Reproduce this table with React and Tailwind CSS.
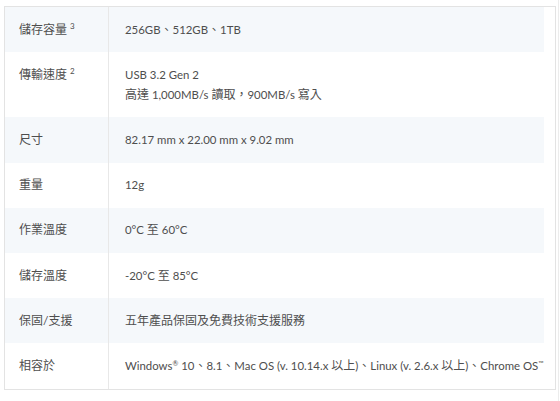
const rows = [
  { label: "儲存容量", sup: "3", value: ["256GB、512GB、1TB"] },
  { label: "傳輸速度", sup: "2", value: ["USB 3.2 Gen 2", "高達 1,000MB/s 讀取，900MB/s 寫入"] },
  { label: "尺寸", value: ["82.17 mm x 22.00 mm x 9.02 mm"] },
  { label: "重量", value: ["12g"] },
  { label: "作業溫度", value: ["0°C 至 60°C"] },
  { label: "儲存溫度", value: ["-20°C 至 85°C"] },
  { label: "保固/支援", value: ["五年產品保固及免費技術支援服務"] },
  { label: "相容於", value: null },
];

function Mixed({ text }) {
  const parts = text.split(/([\u3000-\u303f\u4e00-\u9fff\uff00-\uffef]+)/).filter(Boolean);
  return parts.map((part, i) =>
    /[\u3000-\u303f\u4e00-\u9fff\uff00-\uffef]/.test(part) ? (
      <span key={i}>{part}</span>
    ) : (
      <span key={i} className="text-[11.4px]">
        {part}
      </span>
    )
  );
}

export default function App() {
  return (
    <div
      className="flex h-[401px] w-[560px] bg-white text-[12px] leading-5 text-[#4e4e4e]"
      style={{ fontFamily: 'Lato, "Noto Sans CJK TC", sans-serif' }}
    >
      <div className="flex-1 pl-1 pr-[2px] pt-[6px]">
        <div className="border border-[#e3e3e3] pr-[11px]">
          {rows.map((row, i) => (
            <div key={row.label} className={`flex ${i % 2 === 0 ? "bg-[#f5f8fb]" : "bg-white"}`}>
              <div className="w-[104px] shrink-0 border-r border-[#e8e8e8] py-[12.6px] pl-[14px]">
                {row.label}
                {row.sup ? <span className="ml-[3px] align-[5px] text-[8px] leading-none">{row.sup}</span> : null}
              </div>
              <div className="flex-1 py-[12.6px] pl-4">
                {row.value ? (
                  row.value.map((line) => (
                    <div key={line}>
                      <Mixed text={line} />
                    </div>
                  ))
                ) : (
                  <div className="whitespace-nowrap">
                    <span className="text-[11.4px]">Windows</span>
                    <span className="align-[4px] text-[7px] leading-none">®</span>
                    <Mixed text=" 10、8.1、Mac OS (v. 10.14.x 以上)、Linux (v. 2.6.x 以上)、Chrome OS" />
                    <span className="align-[4px] text-[7px] leading-none">™</span>
                  </div>
                )}
              </div>
            </div>
          ))}
        </div>
      </div>
      <div className="w-px bg-[#ececec]" />
      <div className="w-[2px]" />
    </div>
  );
}
